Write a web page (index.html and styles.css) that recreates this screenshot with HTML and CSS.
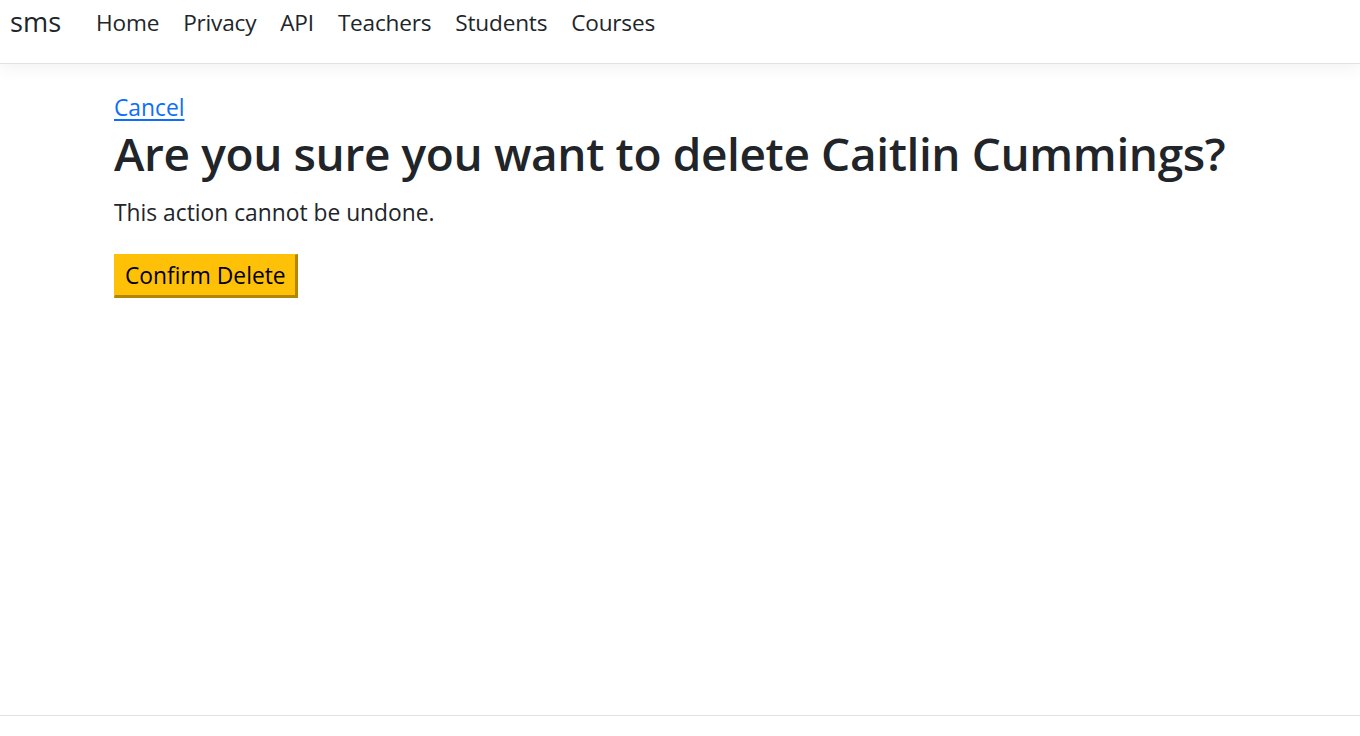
FILE: index.html
```html
<!DOCTYPE html>
<html lang="en">
<head>
<meta charset="utf-8">
<title>Delete - sms</title>
<link rel="stylesheet" href="styles.css">
</head>
<body>
<header class="navbar">
  <a class="brand" href="#">sms</a>
  <nav class="nav">
    <a class="nav-link" href="#">Home</a>
    <a class="nav-link" href="#">Privacy</a>
    <a class="nav-link" href="#">API</a>
    <a class="nav-link" href="#">Teachers</a>
    <a class="nav-link" href="#">Students</a>
    <a class="nav-link" href="#">Courses</a>
  </nav>
</header>
<main class="container">
  <div class="back"><a class="cancel" href="#">Cancel</a></div>
  <h1 class="title">Are you sure you want to delete Caitlin Cummings?</h1>
  <p class="lead">This action cannot be undone.</p>
  <form class="form">
    <button type="button" class="btn-confirm">Confirm Delete</button>
  </form>
</main>
<footer class="footer"></footer>
</body>
</html>
```
FILE: styles.css
```css
* { box-sizing: border-box; }
html, body { margin: 0; padding: 0; }
body {
  font-family: "Open Sans", "Noto Sans", sans-serif;
  color: #212529;
  background: #fff;
  font-size: 22.8px;
  line-height: 1.5;
  min-height: 736px;
  display: flex;
  flex-direction: column;
}
.navbar {
  height: 64px;
  display: flex;
  align-items: flex-start;
  padding: 0 10px;
  border-bottom: 1px solid #dee2e6;
  box-shadow: 0 5px 15px rgba(0,0,0,0.05);
}
.brand {
  font-size: 27.2px;
  line-height: 1.5;
  padding-top: 2px;
  color: #212529;
  text-decoration: none;
  margin-right: 35px;
}
.nav { display: flex; gap: 24px; padding-top: 6px; }
.nav-link {
  color: #212529;
  text-decoration: none;
  font-size: 22.6px;
  line-height: 1.5;
  letter-spacing: -0.2px;
}
.container {
  flex: 1;
  padding: 0 114px;
}
.back {
  line-height: 1.2;
  margin-top: 29.5px;
}
.cancel {
  color: #0d6efd;
  text-decoration: underline;
  text-underline-offset: 3px;
}
.title {
  margin: 1.6px 0 11px;
  font-size: 46px;
  font-weight: 600;
  line-height: 1.36;
  letter-spacing: -0.38px;
}
.lead { margin: 0 0 24px; }
.form { margin: 0; }
.btn-confirm {
  font-family: inherit;
  font-size: 22.8px;
  color: #000;
  background: #ffc107;
  border-style: solid;
  border-color: #ffc107 #b38600 #b38600 #ffc107;
  border-width: 1px 3px 3px 1px;
  padding: 4px 9px 2px 10px;
  height: 44px;
  line-height: 1.5;
  cursor: pointer;
}
.footer {
  height: 21px;
  border-top: 1px solid #dee2e6;
}
```
